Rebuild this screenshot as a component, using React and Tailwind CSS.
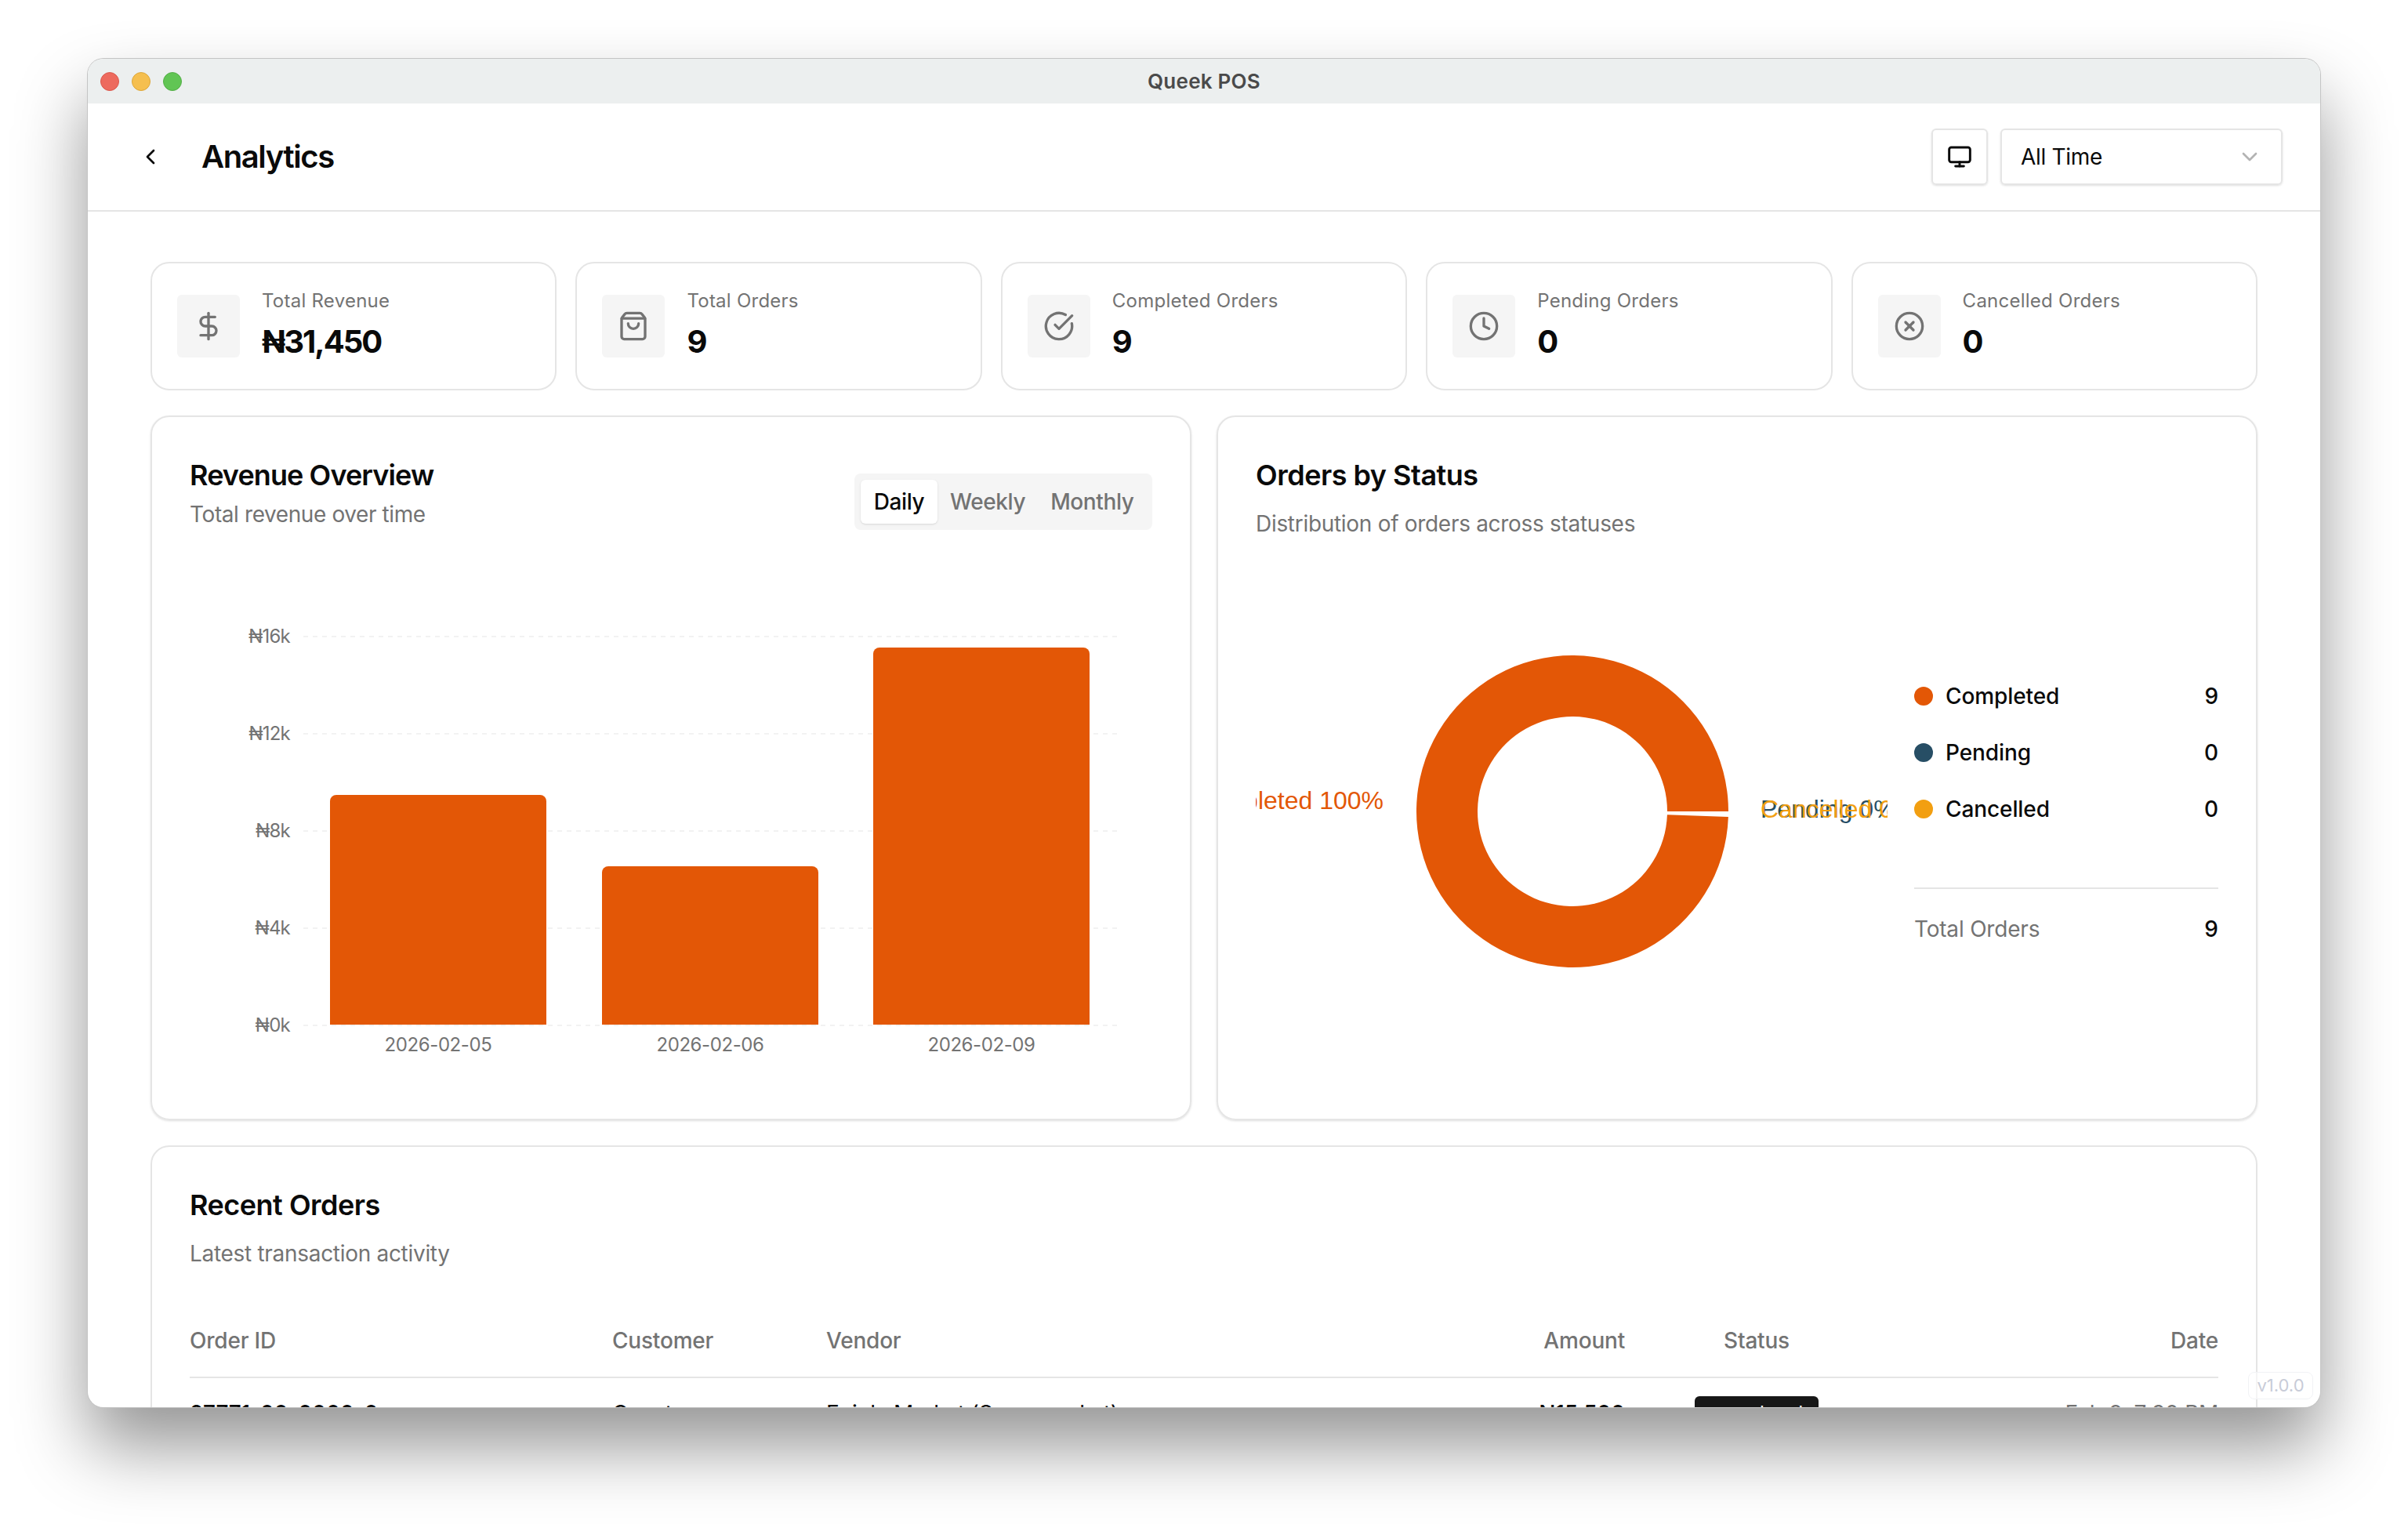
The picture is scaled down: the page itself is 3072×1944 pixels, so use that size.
import { ChevronLeft, ChevronDown, Monitor, DollarSign, ShoppingBag, CircleCheckBig, Clock, CircleX } from 'lucide-react'

const stats = [
  { label: 'Total Revenue', value: '₦31,450', Icon: DollarSign },
  { label: 'Total Orders', value: '9', Icon: ShoppingBag },
  { label: 'Completed Orders', value: '9', Icon: CircleCheckBig },
  { label: 'Pending Orders', value: '0', Icon: Clock },
  { label: 'Cancelled Orders', value: '0', Icon: CircleX },
]

const legend = [
  { label: 'Completed', value: 9, color: 'bg-[#e35706]' },
  { label: 'Pending', value: 0, color: 'bg-[#274e65]' },
  { label: 'Cancelled', value: 0, color: 'bg-[#f29f11]' },
]

const ticks = [
  { label: '₦16k', y: 112 },
  { label: '₦12k', y: 236 },
  { label: '₦8k', y: 360 },
  { label: '₦4k', y: 484 },
  { label: '₦0k', y: 608 },
]

const bars = [
  { date: '2026-02-05', x: 179, top: 314 },
  { date: '2026-02-06', x: 526, top: 405 },
  { date: '2026-02-09', x: 872, top: 126 },
]

function RevenueChart() {
  return (
    <svg width="1228" height="680" className="block">
      {ticks.map((t) => (
        <g key={t.label}>
          <line x1="145" x2="1183" y1={t.y} y2={t.y} stroke="#f2f2f2" strokeWidth="2" strokeDasharray="6 6" />
          <text x="128" y={t.y + 8} textAnchor="end" fontSize="24" letterSpacing="-0.8" fill="#737373" fontFamily="Inter, sans-serif">{t.label}</text>
        </g>
      ))}
      {bars.map((b) => (
        <g key={b.date}>
          <path
            d={`M${b.x} 607V${b.top + 8}a8 8 0 0 1 8 -8H${b.x + 268}a8 8 0 0 1 8 8V607Z`}
            fill="#e35706"
          />
          <text x={b.x + 138} y="641" textAnchor="middle" fontSize="24" letterSpacing="-0.4" fill="#737373" fontFamily="Inter, sans-serif">{b.date}</text>
        </g>
      ))}
    </svg>
  )
}

function StatusDonut() {
  // svg is 806 wide and clips its labels, as the original chart does
  const cx = 404
  const cy = 339
  const R = 199
  const r = 121
  const c = Math.cos((2 * Math.PI) / 180)
  const s = Math.sin((2 * Math.PI) / 180)
  const d = `M${cx + R} ${cy}A${R} ${R} 0 1 0 ${cx + R * c} ${cy + R * s}L${cx + r * c} ${cy + r * s}A${r} ${r} 0 1 1 ${cx + r} ${cy}Z`
  const font = '"Liberation Sans", Arial, sans-serif'
  return (
    <svg width="806" height="680" className="block shrink-0 overflow-hidden">
      <path d={d} fill="#e35706" />
      <text x="163" y="336" textAnchor="end" fontSize="32" fill="#e35706" fontFamily={font}>Completed 100%</text>
      <text x="644" y="347" fontSize="32" fill="#274e65" fontFamily={font}>Pending 0%</text>
      <text x="644" y="347" fontSize="32" fill="#f29f11" fontFamily={font}>Cancelled 0%</text>
    </svg>
  )
}

function CardHead({ title, subtitle }) {
  return (
    <div>
      <h2 className="text-[36px] leading-[52px] font-semibold tracking-[-0.5px] text-[#0a0a0a]">{title}</h2>
      <p className="mt-[16px] text-[28px] leading-[40px] tracking-[-0.3px] text-[#737373]">{subtitle}</p>
    </div>
  )
}

export default function App() {
  return (
    <div className="w-[3072px] h-[1944px] bg-white overflow-hidden pt-[75px] pl-[112px] font-['Inter',sans-serif]">
      <div className="relative w-[2848px] h-[1720px] rounded-[20px] overflow-hidden bg-white shadow-[0_50px_90px_rgba(0,0,0,0.42)] ring-1 ring-[#c4c4c4]">
        <div className="relative h-[57px] bg-[#ecefef] flex items-center justify-center">
          <div className="absolute left-[16px] top-[17px] flex gap-[16px]">
            <span className="w-[24px] h-[24px] rounded-full bg-[#ed6a5e] border border-[#d9584d]" />
            <span className="w-[24px] h-[24px] rounded-full bg-[#f5bf4f] border border-[#dca63a]" />
            <span className="w-[24px] h-[24px] rounded-full bg-[#61c554] border border-[#52ad45]" />
          </div>
          <span className="text-[26px] font-semibold tracking-[0.25px] text-[#4a4a4a]">Queek POS</span>
        </div>

        <header className="h-[138px] border-b-2 border-[#e5e5e5] flex items-center justify-between pl-[64px] pr-[48px]">
          <div className="flex items-center gap-[49px]">
            <ChevronLeft size={32} strokeWidth={2} className="text-[#0a0a0a]" />
            <h1 className="text-[40px] font-semibold tracking-[-1.4px] text-[#0a0a0a]">Analytics</h1>
          </div>
          <div className="flex items-center gap-[16px]">
            <div className="w-[72px] h-[72px] border-2 border-[#e5e5e5] rounded-[6px] shadow-sm flex items-center justify-center">
              <Monitor size={32} strokeWidth={2.2} className="text-[#0a0a0a]" />
            </div>
            <div className="w-[360px] h-[72px] border-2 border-[#e5e5e5] rounded-[6px] shadow-sm flex items-center justify-between pl-[24px] pr-[24px]">
              <span className="text-[28px] tracking-[-0.3px] text-[#0a0a0a]">All Time</span>
              <ChevronDown size={32} strokeWidth={2} className="text-[#b3b3b3]" />
            </div>
          </div>
        </header>

        <main className="px-[80px] pt-[64px]">
          <div className="grid grid-cols-5 gap-[24px]">
            {stats.map(({ label, value, Icon }) => (
              <div key={label} className="h-[164px] border-2 border-[#e5e5e5] rounded-[24px] px-[32px] flex items-center gap-[28px]">
                <div className="w-[80px] h-[80px] rounded-[6px] bg-[#f5f5f5] flex items-center justify-center shrink-0">
                  <Icon size={40} strokeWidth={2} className="text-[#737373]" />
                </div>
                <div className="-mt-[2px]">
                  <p className="text-[24px] leading-[36px] tracking-[0.25px] text-[#737373]">{label}</p>
                  <p className="mt-[6px] text-[40px] leading-[56px] font-bold tracking-[-2px] text-[#0a0a0a]">{value}</p>
                </div>
              </div>
            ))}
          </div>

          <div className="mt-[32px] grid grid-cols-2 gap-[32px]">
            <section className="h-[899px] border-2 border-[#e5e5e5] rounded-[24px] px-[48px] pt-[48px] shadow-sm">
              <div className="h-[120px] flex items-start justify-between">
                <div>
                  <h2 className="text-[36px] leading-[52px] font-semibold tracking-[-0.9px] text-[#0a0a0a]">Revenue Overview</h2>
                  <p className="mt-[4px] text-[28px] leading-[40px] tracking-[-0.4px] text-[#737373]">Total revenue over time</p>
                </div>
                <div className="mt-[24px] h-[72px] w-[380px] rounded-[8px] bg-[#f5f5f5] p-[8px] flex items-center text-[28px] font-medium tracking-[-0.4px] text-[#737373]">
                  <span className="h-[56px] w-[98px] rounded-[6px] bg-white shadow-sm text-[#0a0a0a] flex items-center justify-center">Daily</span>
                  <span className="ml-[16px]">Weekly</span>
                  <span className="ml-[32px]">Monthly</span>
                </div>
              </div>
              <RevenueChart />
            </section>

            <section className="h-[899px] border-2 border-[#e5e5e5] rounded-[24px] px-[48px] pt-[48px] shadow-sm">
              <div className="h-[116px]">
                <CardHead title="Orders by Status" subtitle="Distribution of orders across statuses" />
              </div>
              <div className="flex items-center gap-[34px]">
                <StatusDonut />
                <div className="flex-1">
                  <div className="flex flex-col gap-[32px]">
                    {legend.map((l) => (
                      <div key={l.label} className="flex items-center text-[28px] leading-[40px] tracking-[-0.1px] text-[#0a0a0a]">
                        <span className={`w-[24px] h-[24px] rounded-full ${l.color}`} />
                        <span className="ml-[16px] flex-1 font-medium">{l.label}</span>
                        <span className="font-medium">{l.value}</span>
                      </div>
                    ))}
                  </div>
                  <div className="mt-[80px] border-t-2 border-[#e5e5e5] pt-[31px] flex justify-between text-[28px] leading-[40px]">
                    <span className="tracking-[-0.2px] text-[#737373]">Total Orders</span>
                    <span className="font-medium text-[#0a0a0a]">9</span>
                  </div>
                </div>
              </div>
            </section>
          </div>

          <section className="mt-[32px] border-2 border-[#e5e5e5] rounded-[24px] px-[48px] pt-[48px] h-[600px]">
            <CardHead title="Recent Orders" subtitle="Latest transaction activity" />
            <div className="mt-[44px] grid grid-cols-[539px_273px_1fr_150px_336px_421px] h-[95px] items-center border-b-2 border-[#e5e5e5] text-[28px] font-medium tracking-[-0.2px] text-[#737373]">
              <span>Order ID</span>
              <span>Customer</span>
              <span>Vendor</span>
              <span className="text-right">Amount</span>
              <span className="text-center">Status</span>
              <span className="text-right">Date</span>
            </div>
            <div className="grid grid-cols-[539px_273px_1fr_150px_336px_421px] h-[90px] items-center text-[28px] tracking-[-0.2px]">
              <span className="font-medium text-[#0a0a0a]">27771-00-0000-0</span>
              <span className="text-[#0a0a0a]">Guest</span>
              <span className="text-[#0a0a0a]">Eniola Market (Supermarket)</span>
              <span className="text-right font-medium text-[#0a0a0a]">₦15,500</span>
              <div className="flex justify-center">
                <span className="w-[158px] h-[44px] rounded-[6px] bg-[#171717] text-white text-[24px] flex items-center justify-center">completed</span>
              </div>
              <span className="text-right text-[#737373]">Feb 9, 7:30 PM</span>
            </div>
          </section>
        </main>

        <div className="absolute left-[2756px] top-[1675px] w-[83px] h-[35px] rounded-[8px] border border-[#f1f2f5] bg-white/60 flex items-center justify-center text-[22px] text-[#c8ccd8]">v1.0.0</div>
      </div>
    </div>
  )
}
